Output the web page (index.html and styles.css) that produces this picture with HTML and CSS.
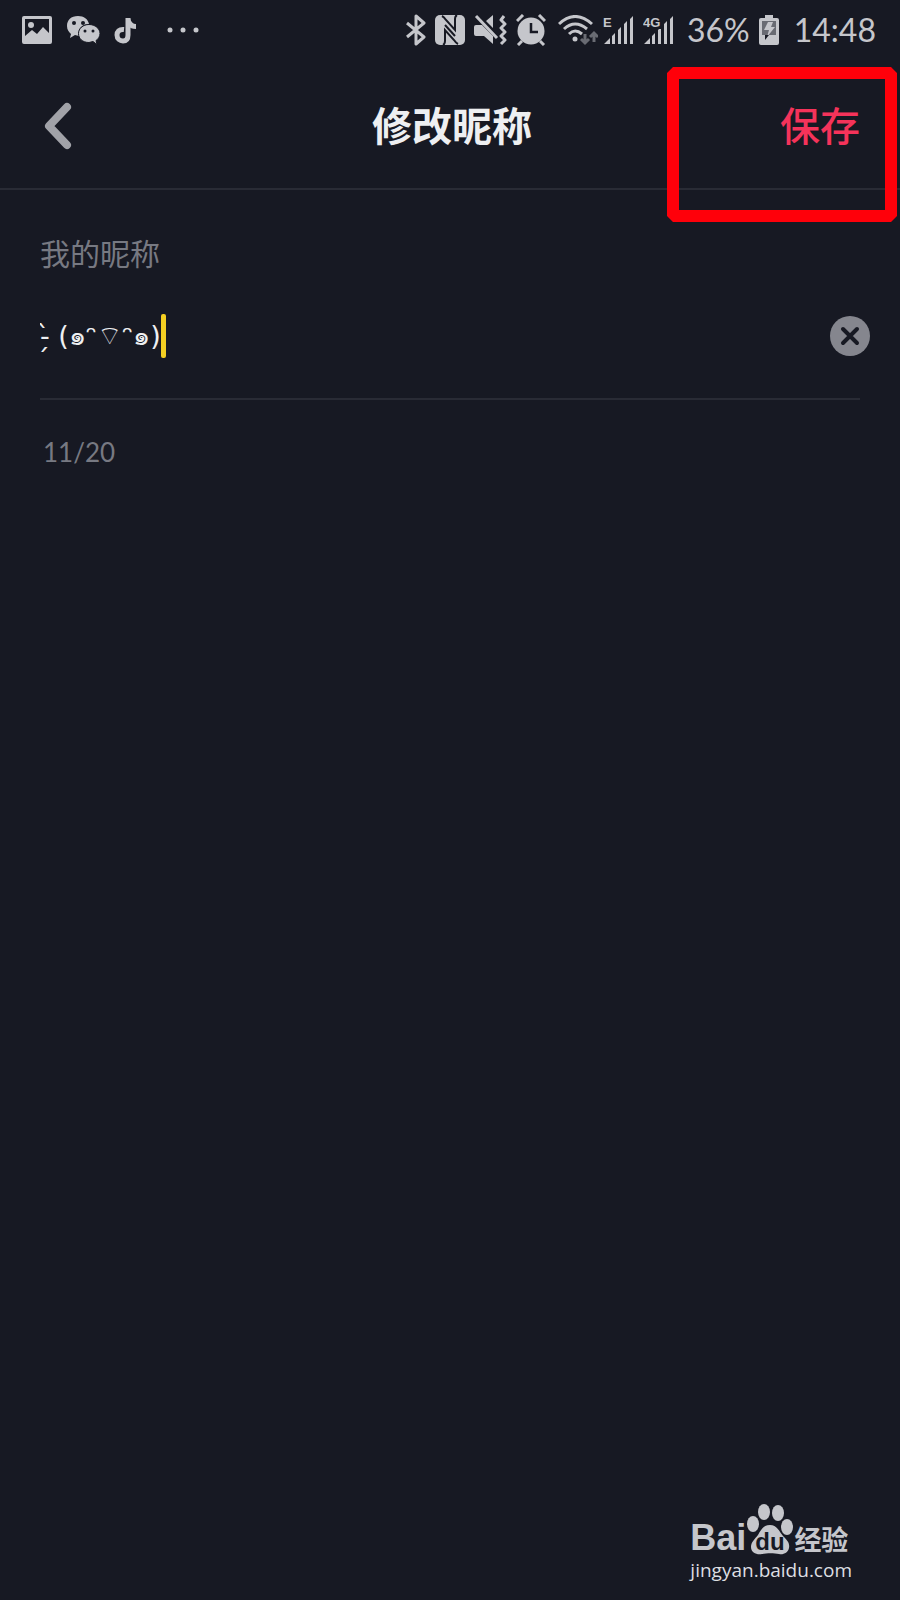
FILE: index.html
```
<!DOCTYPE html>
<html lang="zh-CN">
<head>
<meta charset="utf-8">
<meta name="viewport" content="width=device-width, initial-scale=1">
<title>修改昵称</title>
<link rel="stylesheet" href="styles.css">
</head>
<body>
<div class="status">
  <div class="notices">
    <svg width="30" height="28" viewBox="0 0 30 28"><path fill="currentColor" fill-rule="evenodd" d="M2 0h26q2 0 2 2v24q0 2-2 2H2q-2 0-2-2V2q0-2 2-2zM3 3v17l7-6 5 4 6-7 6 6V3z"/><circle cx="9" cy="9" r="3" fill="currentColor"/></svg>
    <svg width="34" height="30" viewBox="0 0 34 30"><path fill="currentColor" d="M12 1C5 1 1 5 1 11c0 4 2 6 4 8l-1 4 5-3 4 1c-2-7 3-12 10-12C22 4 18 1 12 1z"/><path fill="currentColor" stroke="#171923" d="M23 9.500c-6 0-10.500 4-10.500 9s4 9 10.500 9l4-1 4 3-1-4c2-1 4-4 4-7 0-5-5-9-11-9z"/><g fill="#171923"><circle cx="8" cy="8" r="2"/><circle cx="17" cy="8" r="2"/><circle cx="19" cy="16" r="1.500"/><circle cx="27" cy="16" r="1.500"/></g></svg>
    <svg width="23" height="27" viewBox="0 0 23 27"><path fill="none" stroke="currentColor" stroke-width="5" d="M10 12.500C5 12 3 15 3 18c0 4 3 6 6 6s5-2 5-6V1"/><path fill="currentColor" d="M12 1h4c1 4 3 6 6 6v5c-4 0-6-1-8-3z"/></svg>
    <svg class="dots" width="32" height="6" viewBox="0 0 32 6" fill="currentColor"><circle cx="3" cy="3" r="2.500"/><circle cx="16" cy="3" r="2.500"/><circle cx="29" cy="3" r="2.500"/></svg>
  </div>
  <div class="system">
    <svg width="20" height="32" viewBox="0 0 20 32"><path fill="none" stroke="currentColor" stroke-width="3" stroke-linejoin="round" d="M1 9l17 14-8 7V2l8 7L1 23"/></svg>
    <svg width="30" height="30" viewBox="0 0 30 30"><rect width="30" height="30" rx="5" fill="currentColor"/><g fill="none" stroke="#171923" stroke-width="2"><path d="M7 1Q9 2 11 5L20 15V4Q20 1 22 0"/><path d="M23 29Q21 28 19 25L10 15V26Q10 29 8 30"/><path d="M10 10L20 21"/></g></svg>
    <svg width="33" height="32" viewBox="0 0 33 32"><path fill="currentColor" d="M2 11h6l11 11v8l-9-8H2q-2 0-2-2v-7q0-2 2-2zM12 7l7-6v13z"/><path fill="none" stroke="currentColor" stroke-width="3" d="M2 2l21 22"/><path fill="none" stroke="currentColor" stroke-width="3" stroke-linejoin="round" d="M30 2l-3 4 4 4-4 4 4 4-4 4 4 4-4 4"/></svg>
    <svg width="30" height="32" viewBox="0 0 30 32"><circle cx="15" cy="17" r="13.500" fill="currentColor"/><path fill="none" stroke="currentColor" stroke-width="3" d="M1 7l6-6M23 1l6 6M6 27l-4 4M24 27l4 4"/><path fill="none" stroke="#171923" stroke-width="2.500" d="M15 9v9h7"/></svg>
    <svg class="wifi" width="40" height="31" viewBox="0 0 40 31"><g fill="none" stroke="currentColor" stroke-width="3"><path d="M1 9Q17-6 34 9M6 14q11-10 23 0M11 19q6-6 13 0"/></g><circle cx="17" cy="24" r="2.500" fill="currentColor"/><path fill="none" stroke="#696b73" stroke-width="3" d="M27 19v9M23 24l4 4 4-4M36 27v-9M32 22l4-4 4 4"/></svg>
    <svg class="signal" width="31" height="29" viewBox="0 0 31 29"><path fill="currentColor" d="M1 28l6-6v6zM9 20l3-3v11H9zM15 14l3-3v17h-3zM21 8l3-3v23h-3zM27 3l3-3v28h-3z"/><text class="net" x="0" y="11">E</text></svg>
    <svg class="signal" width="31" height="29" viewBox="0 0 31 29"><path fill="currentColor" d="M1 28l6-6v6zM9 20l3-3v11H9zM15 14l3-3v17h-3zM21 8l3-3v23h-3zM27 3l3-3v28h-3z"/><rect width="19" height="13" fill="#171923"/><text class="net" x="0" y="11">4G</text></svg>
    <span class="percent">36%</span>
    <svg width="20" height="30" viewBox="0 0 20 30"><path fill="currentColor" d="M6 0h8v3h4q2 0 2 2v23q0 2-2 2H2q-2 0-2-2V5q0-2 2-2h4z"/><path fill="#696b73" d="M3 6h14v14H3z"/><path fill="currentColor" d="M9 7h5l-2 5h4l-8 10 2-7H5z"/><path fill="#171923" d="M6 20h4l-4 5z"/></svg>
    <time class="clock">14:48</time>
  </div>
</div>
<header class="header">
  <button class="back" type="button" aria-label="返回"><svg width="28" height="48" viewBox="0 0 28 48"><path fill="none" stroke="currentColor" stroke-width="8" stroke-linecap="round" stroke-linejoin="round" d="M23 5L5 24l18 19"/></svg></button>
  <h1 class="title">修改昵称</h1>
  <button class="save" type="button">保存</button>
  <div class="marker"><svg width="100%" height="100%" aria-hidden="true"><rect class="frame" width="100%" height="100%"/></svg></div>
</header>
<main class="main">
  <label class="label" for="nickname">我的昵称</label>
  <div class="field">
    <input class="input" id="nickname" type="text" maxlength="20" value="-̗̀ (๑ᵔ⌔ᵔ๑)">
    <span class="caret"></span>
    <button class="clear" type="button" aria-label="清除"><svg width="40" height="40" viewBox="0 0 40 40"><circle cx="20" cy="20" r="20" fill="#85868e"/><path stroke="#171923" stroke-width="4" stroke-linecap="round" d="M13 13l14 14M27 13L13 27"/></svg></button>
  </div>
  <p class="count">11/20</p>
</main>
<footer class="brand">
  <div class="logo">
    <span class="bai">Bai</span>
    <span class="paw"><svg width="48" height="52" viewBox="0 0 48 52" fill="currentColor"><ellipse cx="7" cy="20" rx="6" ry="8"/><ellipse cx="18" cy="8" rx="6" ry="8"/><ellipse cx="32" cy="9" rx="6" ry="8"/><ellipse cx="41" cy="23" rx="6" ry="8"/><path d="M24 21c7 0 9 6 13 11 4 4 7 7 6 12-1 5-6 7-10 6-5-1-12-1-17 0-5 1-11-1-11-7 0-5 4-8 7-12 3-5 5-10 12-10z"/><text class="du" x="24" y="46" text-anchor="middle">du</text></svg></span>
    <span class="jingyan">经验</span>
  </div>
  <div class="site">jingyan.baidu.com</div>
</footer>
</body>
</html>
```
FILE: styles.css
```
* { box-sizing: border-box; }
body {
  margin: 0;
  min-height: 100vh;
  display: flex;
  flex-direction: column;
  background: #171923;
  color: #c5c6cb;
  font-family: Lato, "Noto Sans CJK SC", sans-serif;
}
svg { display: block; flex: none; }
button { padding: 0; border: 0; background: none; font: inherit; color: inherit; }

.status {
  display: flex;
  justify-content: space-between;
  align-items: center;
  height: 60px;
  padding: 0 24px 0 22px;
}
.notices { display: flex; align-items: center; gap: 14px; }
.notices .dots { margin-left: 16px; }
.system { display: flex; align-items: center; gap: 9px; }
.system .wifi { margin-left: 3px; }
.system .signal + .percent { margin-left: 4px; }
.system .wifi + .signal { margin-left: -4px; }
.percent, .clock { font-size: 32px; line-height: 40px; }
.clock { margin-left: 6px; }
.net { font: bold 13px "Liberation Sans", sans-serif; fill: currentColor; }

.header {
  position: relative;
  display: grid;
  grid-template-columns: 1fr auto 1fr;
  align-items: center;
  height: 130px;
  padding: 4px 40px 0 44px;
  border-bottom: 2px solid #292b35;
}
.back { justify-self: start; color: #a1a2a8; }
.title { margin: 0; font-size: 40px; line-height: 56px; font-weight: 700; color: #eeeff1; }
.save { justify-self: end; font-size: 40px; line-height: 56px; font-weight: 500; color: #f5335a; }
.marker {
  position: absolute;
  top: 7px;
  right: 3px;
  width: 230px;
  height: 155px;
  padding: 6px;
  pointer-events: none;
}
.marker svg { overflow: visible; }
.frame { fill: none; stroke: #ff000a; stroke-width: 12px; stroke-linejoin: bevel; }

.main { flex: 1; padding: 42px 40px; }
.label { display: block; font-size: 30px; line-height: 42px; color: #777982; }
.field {
  display: flex;
  align-items: center;
  height: 126px;
  padding-bottom: 2px;
  margin-right: -10px;
  background: linear-gradient(#292b35, #292b35) left bottom / calc(100% - 10px) 2px no-repeat;
}
.input {
  field-sizing: content;
  padding: 0;
  border: 0;
  outline: 0;
  background: none;
  color: #eeeff1;
  font-family: "DejaVu Sans", "Noto Sans", sans-serif;
  font-size: 27px;
  line-height: 40px;
}
.caret { width: 5px; height: 44px; border-radius: 2px; background: #f4cf22; }
.clear { margin-left: auto; }
.count { margin: 32px 0 0; padding-left: 3px; font-size: 26px; line-height: 40px; color: #777982; }

.brand { align-self: flex-end; padding: 0 48px 16px 0; color: #c5c6cb; }
.logo { display: flex; align-items: flex-end; height: 52px; }
.bai { font-family: "Liberation Sans", sans-serif; font-weight: 700; font-size: 36px; line-height: 36px; }
.du { font: bold 24px "Liberation Sans", sans-serif; fill: #171923; }
.jingyan { font-size: 27px; line-height: 32px; font-weight: 700; }
.site { font-family: "Open Sans", sans-serif; font-size: 19px; line-height: 28px; color: #dedfe2; }
```
